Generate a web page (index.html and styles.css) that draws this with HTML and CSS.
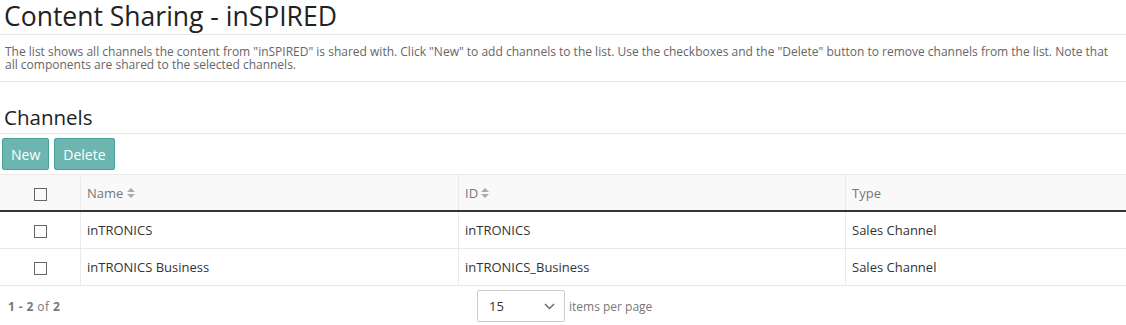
FILE: index.html
```html
<!DOCTYPE html>
<html>
<head>
  <title>Content Sharing - inSPIRED</title>
  <link rel="stylesheet" href="styles.css">
</head>
<body>
  <h1 class="page-title">Content Sharing - inSPIRED</h1>
  <p class="intro">The list shows all channels the content from "inSPIRED" is shared with. Click "New" to add channels to the list. Use the checkboxes and the "Delete" button to remove channels from the list. Note that all components are shared to the selected channels.</p>

  <h2 class="section-title">Channels</h2>
  <div class="toolbar">
    <button class="btn">New</button>
    <button class="btn">Delete</button>
  </div>

  <table class="grid">
    <thead>
      <tr>
        <th class="col-check"><span class="check"></span></th>
        <th class="col-name">Name <span class="sort"></span></th>
        <th class="col-id">ID <span class="sort"></span></th>
        <th>Type</th>
      </tr>
    </thead>
    <tbody>
      <tr>
        <td class="col-check"><span class="check"></span></td>
        <td>inTRONICS</td>
        <td>inTRONICS</td>
        <td>Sales Channel</td>
      </tr>
      <tr>
        <td class="col-check"><span class="check"></span></td>
        <td>inTRONICS Business</td>
        <td>inTRONICS_Business</td>
        <td>Sales Channel</td>
      </tr>
    </tbody>
  </table>

  <div class="pager">
    <div class="pager-info"><b>1 - 2</b> of <b>2</b></div>
    <div class="pager-size">
      <div class="select">
        <span>15</span>
        <svg width="11" height="7" viewBox="0 0 11 7"><path d="M1 1 L5.5 5.5 L10 1" fill="none" stroke="#666" stroke-width="1.4"/></svg>
      </div>
      <span class="pager-label">items per page</span>
    </div>
  </div>
</body>
</html>
```

FILE: styles.css
```css
body {
  margin: 0;
  font-family: "Open Sans", "Noto Sans", sans-serif;
  color: #333;
  background: #fff;
}

.page-title {
  margin: 0;
  padding: 0 4px;
  height: 34px;
  line-height: 32px;
  font-size: 26.5px;
  font-weight: normal;
  color: #222;
  border-bottom: 1px solid #e8e8e8;
}

.intro {
  margin: 0;
  padding: 10px 5px 8px;
  font-size: 12px;
  line-height: 13px;
  color: #666;
  border-bottom: 1px solid #e8e8e8;
  min-height: 28px;
}

.section-title {
  margin: 0;
  padding: 20px 4px 0;
  height: 31px;
  line-height: 30px;
  font-size: 20.5px;
  font-weight: normal;
  color: #222;
  border-bottom: 1px solid #e8e8e8;
}

.toolbar {
  display: flex;
  gap: 5px;
  padding: 4px 2px 4px;
}

.btn {
  font-family: inherit;
  font-size: 14px;
  color: #fff;
  background: #6cb5b0;
  border: 1px solid #46a199;
  border-radius: 2px;
  height: 32px;
  padding: 0 8px;
}

.grid {
  width: 100%;
  border-collapse: collapse;
  font-size: 13px;
}

.grid th {
  background: #f9f9f9;
  color: #777;
  font-weight: normal;
  text-align: left;
  height: 35px;
  padding: 0 6px;
  border-top: 1px solid #eaeaea;
  border-bottom: 2px solid #333;
  border-left: 1px solid #eaeaea;
}

.grid td {
  height: 36px;
  padding: 0 6px;
  border-bottom: 1px solid #e8e8e8;
  border-left: 1px solid #eaeaea;
}

.grid th:first-child,
.grid td:first-child {
  border-left: none;
}

.col-check {
  width: 68px;
  text-align: center !important;
}

.col-name {
  width: 365px;
}

.col-id {
  width: 374px;
}

.check {
  display: inline-block;
  width: 11px;
  height: 11px;
  border: 1px solid #666;
  vertical-align: middle;
}

.sort {
  display: inline-block;
  width: 8px;
  height: 10px;
  vertical-align: middle;
  position: relative;
  top: -1px;
}

.sort::before,
.sort::after {
  content: "";
  position: absolute;
  left: 0;
  border-left: 4px solid transparent;
  border-right: 4px solid transparent;
}

.sort::before {
  top: 0;
  border-bottom: 4px solid #aaa;
}

.sort::after {
  bottom: 0;
  border-top: 4px solid #aaa;
}

.pager {
  display: flex;
  align-items: center;
  height: 40px;
}

.pager-info {
  width: 477px;
  padding-left: 8px;
  box-sizing: border-box;
  font-size: 12px;
  letter-spacing: 0.4px;
  color: #777;
}

.pager-size {
  display: flex;
  align-items: center;
  gap: 4px;
}

.select {
  display: flex;
  align-items: center;
  justify-content: space-between;
  width: 88px;
  height: 32px;
  box-sizing: border-box;
  padding: 0 9px 0 11px;
  border: 1px solid #ccc;
  border-radius: 2px;
  font-size: 13px;
  color: #333;
}

.pager-label {
  font-size: 12px;
  color: #777;
}
```
